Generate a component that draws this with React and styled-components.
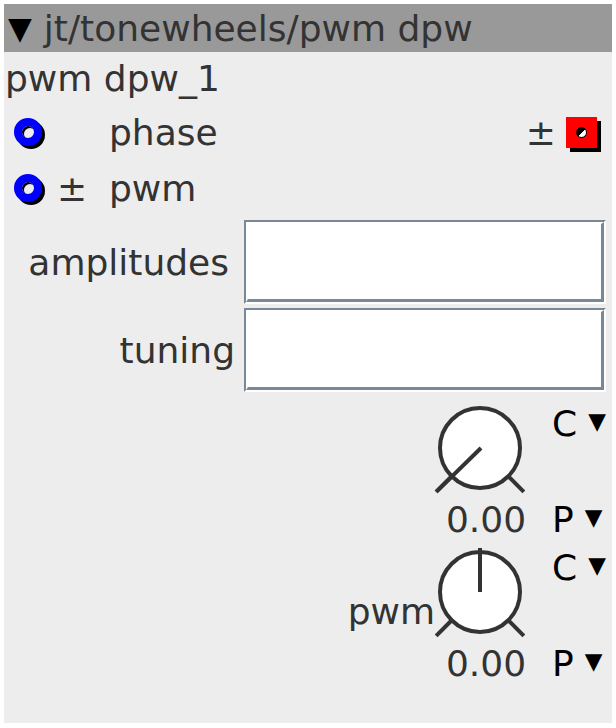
import React from 'react'
import styled, { createGlobalStyle } from 'styled-components'

const GlobalStyle = createGlobalStyle`
  html, body {
    margin: 0;
    padding: 0;
    background: #fff;
  }
  body {
    font-family: "DejaVu Sans", sans-serif;
  }
`

const Panel = styled.div`
  margin: 4px;
  width: 608px;
  height: 719px;
  background: #ededed;
  color: #333;
  font-size: 36px;
  display: flex;
  flex-direction: column;
`

const Header = styled.div`
  height: 48px;
  background: #999;
  display: flex;
  align-items: center;
  padding-left: 4px;
  gap: 12px;
  color: #333;
  & > .arrow {
    color: #000;
    font-size: 31px;
  }
`

const Title = styled.div`
  height: 52px;
  display: flex;
  align-items: center;
  padding-left: 1px;
`

const PortRow = styled.div`
  height: 56px;
  display: flex;
  align-items: center;
  padding: 0 15px 0 10px;
`

const Inlet = styled.span`
  width: 28px;
  height: 28px;
  border: 8px solid #0000ff;
  border-radius: 50%;
  box-sizing: border-box;
  box-shadow: 3px 3px 0 #000, inset 2px 2px 0 #000;
  background: #ededed;
  flex: none;
`

const PlusMinus = styled.span`
  width: 32px;
  margin-left: 14px;
  text-align: center;
  visibility: ${p => (p.$hidden ? 'hidden' : 'visible')};
`

const PortName = styled.span`
  margin-left: 21px;
  flex: 1;
`

const Outlet = styled.span`
  width: 31px;
  height: 31px;
  background: #ff0000;
  box-shadow: 4px 4px 0 #000;
  margin-left: 10px;
  display: flex;
  align-items: center;
  justify-content: center;
  &::after {
    content: '';
    width: 9px;
    height: 9px;
    border-radius: 50%;
    background: linear-gradient(135deg, #000 50%, #fff 50%);
    border: 1px solid #000;
  }
`

const FieldGrid = styled.div`
  display: grid;
  grid-template-columns: 240px 362px;
  row-gap: 4px;
  margin-top: 4px;
`

const FieldLabel = styled.div`
  display: flex;
  align-items: center;
  justify-content: flex-end;
  padding-right: ${p => p.$pad}px;
`

const FieldOuter = styled.div`
  border: 2px solid;
  border-color: #778899 #fff #fff #778899;
  height: 84px;
  box-sizing: border-box;
`

const FieldInner = styled.div`
  border: solid;
  border-width: 2px 3px 3px 2px;
  border-color: #fff #778899 #778899 #fff;
  background: #fff;
  height: 100%;
  box-sizing: border-box;
`

const KnobRow = styled.div`
  height: 144px;
  display: flex;
  justify-content: flex-end;
  margin-top: ${p => p.$top || 0}px;
`

const KnobLabel = styled.div`
  height: 100px;
  display: flex;
  align-items: center;
  padding-top: 34px;
  margin-right: -3px;
  box-sizing: border-box;
`

const KnobCol = styled.div`
  width: 96px;
  display: flex;
  flex-direction: column;
  align-items: center;
`

const KnobValue = styled.div`
  height: 40px;
  line-height: 40px;
  padding-left: 12px;
  white-space: nowrap;
`

const SideCol = styled.div`
  width: 60px;
  margin-left: 24px;
  display: flex;
  flex-direction: column;
  justify-content: space-between;
  color: #000;
  padding: 4px 0 4px;
  box-sizing: border-box;
`

const Choice = styled.div`
  display: flex;
  align-items: center;
  gap: 11px;
  line-height: 40px;
  & > .tri {
    font-size: 23px;
    margin-top: -6px;
  }
`

const Knob = ({ angle }) => {
  const cx = 48
  const cy = 48
  const rad = a => (a * Math.PI) / 180
  const pt = (a, r) => [cx + r * Math.sin(rad(a)), cy - r * Math.cos(rad(a))]
  const [l1x, l1y] = pt(-135, 41)
  const [l2x, l2y] = pt(-135, 62)
  const [r1x, r1y] = pt(135, 41)
  const [r2x, r2y] = pt(135, 62)
  const len = angle === -135 ? 62 : 44
  const [dx, dy] = pt(angle, len)
  return (
    <svg width='96' height='100' viewBox='0 0 96 100'>
      <circle cx={cx} cy={cy} r='40' fill='#fff' stroke='#333' strokeWidth='4' />
      <line x1={l1x} y1={l1y} x2={l2x} y2={l2y} stroke='#333' strokeWidth='4' />
      <line x1={r1x} y1={r1y} x2={r2x} y2={r2y} stroke='#333' strokeWidth='4' />
      <line x1={angle === 0 ? cx : cx + 1} y1={cy} x2={dx} y2={dy} stroke='#333' strokeWidth='4' />
    </svg>
  )
}

const KnobBlock = ({ label, angle, top }) => (
  <KnobRow $top={top}>
    {label && <KnobLabel>{label}</KnobLabel>}
    <KnobCol>
      <Knob angle={angle} />
      <KnobValue>0.00</KnobValue>
    </KnobCol>
    <SideCol>
      <Choice>C<span className='tri'>▼</span></Choice>
      <Choice>P<span className='tri'>▼</span></Choice>
    </SideCol>
  </KnobRow>
)

export default function App () {
  return (
    <>
      <GlobalStyle />
      <Panel>
        <Header>
          <span className='arrow'>▼</span>
          <span>jt/tonewheels/pwm dpw</span>
        </Header>
        <Title>pwm dpw_1</Title>
        <PortRow>
          <Inlet />
          <PlusMinus $hidden>±</PlusMinus>
          <PortName>phase</PortName>
          <span>±</span>
          <Outlet />
        </PortRow>
        <PortRow>
          <Inlet />
          <PlusMinus>±</PlusMinus>
          <PortName>pwm</PortName>
        </PortRow>
        <FieldGrid>
          <FieldLabel $pad={15}>amplitudes</FieldLabel>
          <FieldOuter><FieldInner /></FieldOuter>
          <FieldLabel $pad={9}>tuning</FieldLabel>
          <FieldOuter><FieldInner /></FieldOuter>
        </FieldGrid>
        <KnobBlock angle={-135} top={8} />
        <KnobBlock label='pwm' angle={0} />
      </Panel>
    </>
  )
}
